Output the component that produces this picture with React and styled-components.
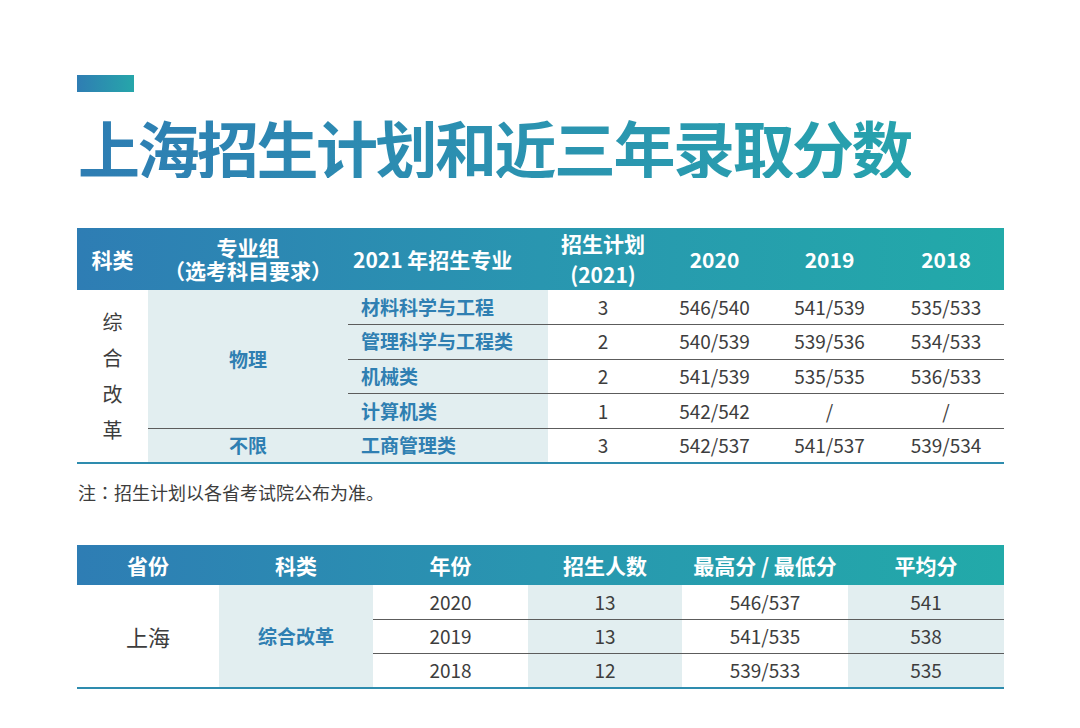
import React from 'react';
import styled, { createGlobalStyle } from 'styled-components';

const GlobalStyle = createGlobalStyle`
  html, body {
    margin: 0;
    padding: 0;
    background: #ffffff;
  }
  body {
    font-family: "Noto Sans CJK SC", "Noto Sans", sans-serif;
    color: #3d3d3d;
  }
`;

const Page = styled.div`
  width: 1080px;
  height: 728px;
  padding: 75px 0 0 77px;
  box-sizing: border-box;
  overflow: hidden;
`;

const AccentBar = styled.div`
  width: 57px;
  height: 17px;
  background: linear-gradient(90deg, #2f7db3, #26a6aa);
`;

const Title = styled.h1`
  margin: 24px 0 0 1px;
  font-size: 62px;
  line-height: 62px;
  height: 62px;
  font-weight: 700;
  letter-spacing: -2.5px;
  white-space: nowrap;
  display: inline-block;
  background: linear-gradient(90deg, #2e7db3 0%, #2b93b0 55%, #27a2ad 100%);
  -webkit-background-clip: text;
  background-clip: text;
  color: transparent;
`;

const Table = styled.table`
  width: 927px;
  border-collapse: collapse;
  table-layout: fixed;
  margin-top: ${p => p.$top}px;
  border-bottom: 2px solid #2e8cae;
`;

const HeadRow = styled.tr`
  height: ${p => p.$h}px;
  background: linear-gradient(90deg, #2e7db4 0%, #2996b0 50%, #22aaa9 100%);
`;

const Th = styled.th`
  padding: ${p => (p.$left ? '0 0 0 5px' : '0')};
  color: #ffffff;
  font-size: 21px;
  font-weight: 700;
  line-height: ${p => p.$lh || 24}px;
  text-align: ${p => (p.$left ? 'left' : 'center')};
  white-space: nowrap;
`;

const Tr = styled.tr`
  height: ${p => p.$h}px;
`;

const Td = styled.td`
  padding: 0;
  text-align: ${p => (p.$left ? 'left' : 'center')};
  padding-left: ${p => (p.$left ? '13px' : '0')};
  font-size: ${p => p.$size || 19}px;
  font-weight: ${p => (p.$strong ? 700 : 400)};
  color: ${p => (p.$strong ? '#2f7fb2' : '#3d3d3d')};
  background: ${p => (p.$tint ? '#e2eef0' : '#ffffff')};
  border-bottom: ${p => (p.$line ? '1px solid #5c5c5c' : 'none')};
  line-height: 1.2;
  vertical-align: middle;
  white-space: nowrap;
`;

const VChars = styled.div`
  display: flex;
  flex-direction: column;
  align-items: center;
  font-size: 20px;
  line-height: 36px;
  color: #3d3d3d;
`;

const Note = styled.p`
  margin: 15px 0 0 1px;
  font-size: 18px;
  line-height: 26px;
  color: #3d3d3d;
`;

const Colon = styled.span`
  font-family: "Noto Sans CJK JP", "Noto Sans CJK SC", sans-serif;
`;

const planRows = [
  { major: '材料科学与工程', plan: 3, s: ['546/540', '541/539', '535/533'] },
  { major: '管理科学与工程类', plan: 2, s: ['540/539', '539/536', '534/533'] },
  { major: '机械类', plan: 2, s: ['541/539', '535/535', '536/533'] },
  { major: '计算机类', plan: 1, s: ['542/542', '/', '/'] },
];

const scoreRows = [
  { year: 2020, count: 13, range: '546/537', avg: 541 },
  { year: 2019, count: 13, range: '541/535', avg: 538 },
  { year: 2018, count: 12, range: '539/533', avg: 535 },
];

const PlanTable = () => (
  <Table $top={49}>
    <colgroup>
      <col style={{ width: 71 }} />
      <col style={{ width: 200 }} />
      <col style={{ width: 200 }} />
      <col style={{ width: 110 }} />
      <col style={{ width: 113 }} />
      <col style={{ width: 117 }} />
      <col style={{ width: 116 }} />
    </colgroup>
    <thead>
      <HeadRow $h={59}>
        <Th>科类</Th>
        <Th $lh={23}>
          专业组
          <br />
          （选考科目要求）
        </Th>
        <Th $left>2021 年招生专业</Th>
        <Th $lh={31}>
          招生计划
          <br />
          (2021)
        </Th>
        <Th>2020</Th>
        <Th>2019</Th>
        <Th>2018</Th>
      </HeadRow>
    </thead>
    <tbody>
      {planRows.map((r, i) => (
        <Tr $h={34.6} key={r.major}>
          {i === 0 && (
            <Td rowSpan={5}>
              <VChars>
                {'综合改革'.split('').map(c => (
                  <span key={c}>{c}</span>
                ))}
              </VChars>
            </Td>
          )}
          {i === 0 && (
            <Td rowSpan={4} $tint $strong $line>
              物理
            </Td>
          )}
          <Td $tint $strong $left $line>
            {r.major}
          </Td>
          <Td $line>{r.plan}</Td>
          {r.s.map((v, j) => (
            <Td $line key={j}>
              {v}
            </Td>
          ))}
        </Tr>
      ))}
      <Tr $h={34.6}>
        <Td $tint $strong>
          不限
        </Td>
        <Td $tint $strong $left>
          工商管理类
        </Td>
        <Td>3</Td>
        <Td>542/537</Td>
        <Td>541/537</Td>
        <Td>539/534</Td>
      </Tr>
    </tbody>
  </Table>
);

const ScoreTable = () => (
  <Table $top={40}>
    <colgroup>
      <col style={{ width: 142 }} />
      <col style={{ width: 154 }} />
      <col style={{ width: 155 }} />
      <col style={{ width: 154 }} />
      <col style={{ width: 166 }} />
      <col style={{ width: 156 }} />
    </colgroup>
    <thead>
      <HeadRow $h={40}>
        <Th>省份</Th>
        <Th>科类</Th>
        <Th>年份</Th>
        <Th>招生人数</Th>
        <Th>最高分 / 最低分</Th>
        <Th>平均分</Th>
      </HeadRow>
    </thead>
    <tbody>
      {scoreRows.map((r, i) => {
        const line = i < scoreRows.length - 1;
        return (
          <Tr $h={34.4} key={r.year}>
            {i === 0 && (
              <Td rowSpan={3} $size={22}>
                上海
              </Td>
            )}
            {i === 0 && (
              <Td rowSpan={3} $tint $strong>
                综合改革
              </Td>
            )}
            <Td $line={line}>{r.year}</Td>
            <Td $line={line} $tint>
              {r.count}
            </Td>
            <Td $line={line}>{r.range}</Td>
            <Td $line={line} $tint>
              {r.avg}
            </Td>
          </Tr>
        );
      })}
    </tbody>
  </Table>
);

export default function App() {
  return (
    <Page>
      <GlobalStyle />
      <AccentBar />
      <Title>上海招生计划和近三年录取分数</Title>
      <PlanTable />
      <Note>
        注<Colon>：</Colon>招生计划以各省考试院公布为准。
      </Note>
      <ScoreTable />
    </Page>
  );
}
